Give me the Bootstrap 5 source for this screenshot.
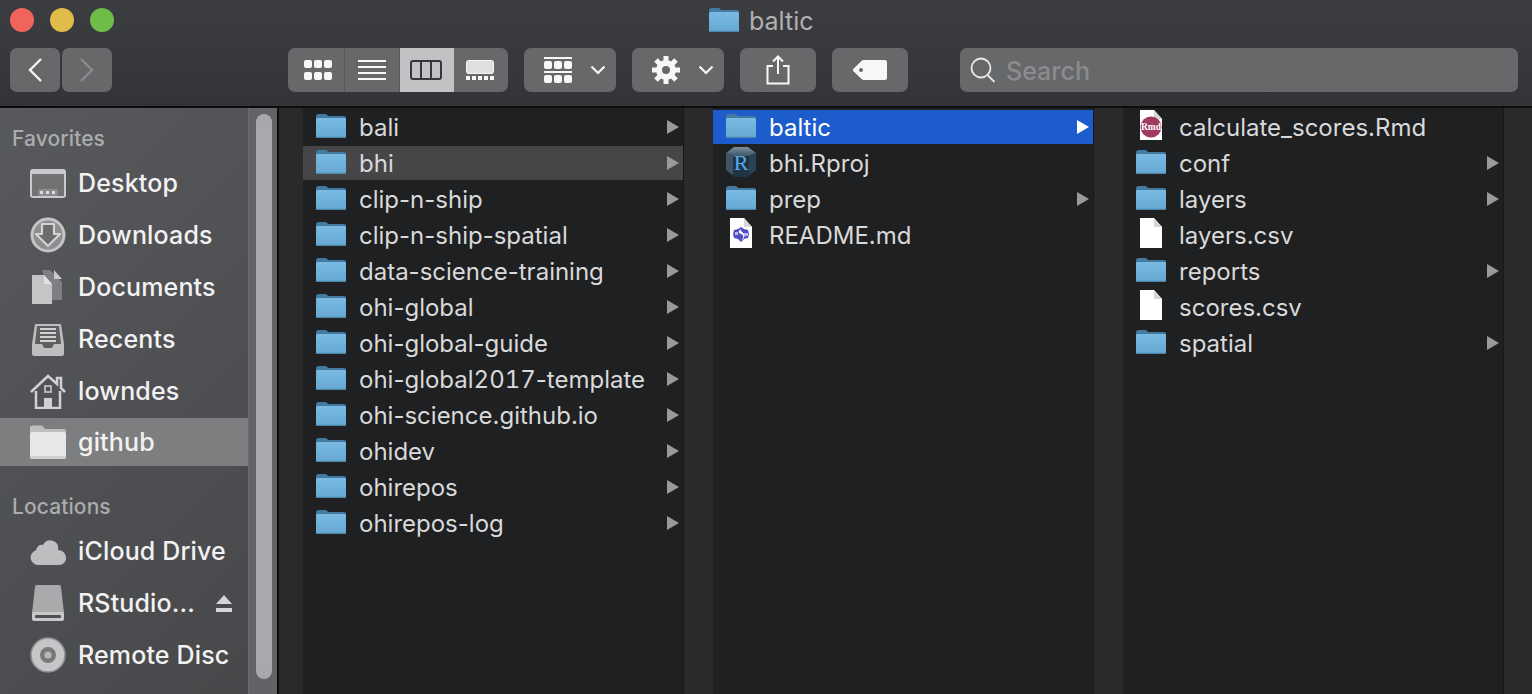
<!DOCTYPE html>
<html lang="en">

<head>
    <meta charset="UTF-8">
    <meta name="viewport" content="width=device-width, initial-scale=1.0">
    <title>baltic</title>
    <link href="https://cdn.jsdelivr.net/npm/bootstrap@5.3.2/dist/css/bootstrap.min.css" rel="stylesheet">
    <style>
        html, body { height: 100%; overflow: hidden; }
        body { background: #1f2022; font-family: Inter, "Liberation Sans", sans-serif; }
        .finder { height: 694px; }

        /* toolbar */
        .topbar { height: 108px; background: linear-gradient(#3c3d40, #333437); border-bottom: 2px solid #0c0c0c; }
        .title-row { height: 48px; }
        .lights { width: 124px; padding: 8px 0 0 10px; gap: 16px; }
        .light { width: 24px; height: 24px; border-radius: 50%; }
        .light-red { background: #f1645c; }
        .light-yellow { background: #e0bd4b; }
        .light-green { background: #6fbd48; }
        .win-title { margin: 0 0 0 585px; padding-top: 9px; gap: 10px; height: 40px; color: #b0b1b3; font-size: 25px; line-height: 24px; }
        .tools { padding-left: 10px; height: 44px; }
        .tbtn { height: 44px; background: #67686a; border-radius: 7px; }
        .nav-prev, .nav-next { width: 50px; }
        .nav-next { margin-left: 2px; margin-right: 176px; }
        .seg-group { width: 220px; overflow: hidden; margin-right: 16px; }
        .seg { height: 44px; border-right: 1px solid #58595b; }
        .seg-on { background: #c1c2c4; border-right: 0; }
        .w-group { width: 92px; margin-right: 16px; }
        .w-share { width: 76px; margin-right: 16px; }
        .w-tag { width: 76px; margin-right: 52px; }
        .search-box { width: 558px; padding-left: 10px; gap: 10px; color: #8b8c8e; font-size: 25px; font-weight: 500; }
        .search-box span { padding-top: 4px; }

        /* sidebar */
        .side { width: 248px; background: linear-gradient(135deg, #58595c, #47484a); }
        .side-scroll { width: 29px; background: #626366; padding: 6px 6px 15px 7px; border-left: 1px solid #6b6c6f; }
        .side-thumb { width: 16px; height: 100%; background: #a7a9ac; border-radius: 8px; }
        .side-rule { width: 2px; background: #0c0c0c; }
        .side-head { color: #abacae; font-size: 21px; font-weight: 500; line-height: 24px; padding-left: 12px; letter-spacing: .1px; }
        .side-row { height: 52px; padding-left: 30px; gap: 12px; color: #f2f2f3; font-size: 25px; font-weight: 500; letter-spacing: .15px; }
        .side-row span { padding-top: 2px; }
        .side-on { height: 48px; background: #7d7e80; }
        .side-icon { width: 36px; height: 36px; flex: none; }

        /* columns */
        .pane-gutter { background: #2a2a2b; flex: none; border-left: 1px solid #181818; }
        .pane-list { width: 380px; flex: none; background: #1f2022; }
        .frow { height: 34px; margin-bottom: 2px; padding: 2px 0 0 13px; gap: 13px; color: #d9d9da; font-size: 24px; white-space: nowrap; }
        .frow-hover { background: #464648; }
        .frow-sel { background: #1d5ccc; color: #fff; }
        .digits { font-variant-numeric: tabular-nums; }
        .ficon { width: 30px; height: 30px; flex: none; }
        .ficon-page { margin-bottom: 6px; }
        .ficon-cube { margin-bottom: 4px; }
        .tri { margin: 0 4px 2px auto; width: 0; height: 0; border-left: 12px solid #9a9a9b; border-top: 7px solid transparent; border-bottom: 7px solid transparent; }
        .frow-sel .tri { border-left-color: #fff; }
    </style>
</head>

<body>
    <svg width="0" height="0" class="position-absolute">
        <defs>
            <linearGradient id="folderFront" x1="0" y1="0" x2="0" y2="1">
                <stop offset="0" stop-color="#78bae2" />
                <stop offset="1" stop-color="#66a8d2" />
            </linearGradient>
            <linearGradient id="cubeTop" x1="0" y1="0" x2="0" y2="1">
                <stop offset="0" stop-color="#7d8f9c" />
                <stop offset="1" stop-color="#3d5566" />
            </linearGradient>
            <symbol id="folder" viewBox="0 0 30 30">
                <path d="M0 3.500C0 2 1 1 2.500 1H9c1.200 0 2 .5 3 2h16c1.200 0 2 .8 2 2v8H0z" fill="#437a9f" />
                <path d="M0 6.500C0 5.500.7 5 2 5h26c1.300 0 2 .5 2 1.500v17c0 .8-.7 1.500-1.500 1.500h-27C.7 25 0 24.300 0 23.500z" fill="url(#folderFront)" />
                <path d="M0 23.800h30v.2c0 .6-.7 1-1.500 1h-27C.7 25 0 24.600 0 24z" fill="#4f86aa" />
            </symbol>
            <symbol id="page" viewBox="0 0 30 30">
                <path d="M4 0h14l8 9v21H4z" fill="#fff" />
                <path d="M18 0v9h8z" fill="#d6d6d6" />
            </symbol>
        </defs>
    </svg>

    <div class="finder d-flex flex-column">
        <header class="topbar flex-shrink-0">
            <div class="title-row d-flex">
                <div class="lights d-flex flex-shrink-0">
                    <div class="light light-red"></div>
                    <div class="light light-yellow"></div>
                    <div class="light light-green"></div>
                </div>
                <h1 class="win-title d-flex fw-normal">
                    <svg width="30" height="30" class="flex-shrink-0" style="margin-top:-2px"><use href="#folder" /></svg>
                    <span>baltic</span>
                </h1>
            </div>
            <div class="tools d-flex">
                <div class="tbtn nav-prev d-flex align-items-center justify-content-center">
                    <svg width="16" height="26" viewBox="0 0 16 26"><path d="M14 2 3 13l11 11" fill="none" stroke="#f4f4f5" stroke-width="2.400" /></svg>
                </div>
                <div class="tbtn nav-next d-flex align-items-center justify-content-center">
                    <svg width="16" height="26" viewBox="0 0 16 26"><path d="m2 2 11 11L2 24" fill="none" stroke="#8a8b8d" stroke-width="2.400" /></svg>
                </div>
                <div class="tbtn seg-group d-flex">
                    <div class="seg d-flex align-items-center" style="width:57px;padding-left:16px">
                        <svg width="28" height="20" viewBox="0 0 28 20" fill="#f7f7f8"><rect width="8" height="8" rx="2" /><rect x="10" width="8" height="8" rx="2" /><rect x="20" width="8" height="8" rx="2" /><rect y="12" width="8" height="8" rx="2" /><rect x="10" y="12" width="8" height="8" rx="2" /><rect x="20" y="12" width="8" height="8" rx="2" /></svg>
                    </div>
                    <div class="seg d-flex align-items-center justify-content-center" style="width:55px">
                        <svg width="28" height="20" viewBox="0 0 28 20" fill="#f7f7f8"><rect width="28" height="2" /><rect y="6" width="28" height="2" /><rect y="12" width="28" height="2" /><rect y="18" width="28" height="2" /></svg>
                    </div>
                    <div class="seg seg-on d-flex align-items-center" style="width:54px;padding-left:10px">
                        <svg width="32" height="20" viewBox="0 0 32 20"><rect x="1" y="1" width="30" height="18" rx="2" fill="none" stroke="#36373a" stroke-width="2" /><path d="M11 1v18M21 1v18" stroke="#36373a" stroke-width="2" /></svg>
                    </div>
                    <div class="seg border-0 d-flex align-items-center" style="width:54px;padding-left:12px">
                        <svg width="28" height="20" viewBox="0 0 28 20"><rect x=".5" y=".5" width="27" height="13" rx="2" fill="#dfe0e1" stroke="#f7f7f8" /><path d="M0 16h4v4H0zM6 16h4v4H6zM12 16h4v4h-4zM18 16h4v4h-4zM24 16h4v4h-4z" fill="#f7f7f8" /></svg>
                    </div>
                </div>
                <div class="tbtn w-group d-flex align-items-center">
                    <svg width="28" height="26" viewBox="0 0 28 26" fill="#f7f7f8" style="margin-left:20px"><rect width="28" height="2" /><rect y="4" width="8" height="8" rx="2" /><rect x="10" y="4" width="8" height="8" rx="2" /><rect x="20" y="4" width="8" height="8" rx="2" /><rect y="14" width="28" height="2" /><rect y="18" width="8" height="8" rx="2" /><rect x="10" y="18" width="8" height="8" rx="2" /><rect x="20" y="18" width="8" height="8" rx="2" /></svg>
                    <svg width="16" height="10" viewBox="0 0 16 10" style="margin-left:18px"><path d="m1.500 1.500 6.500 6.500 6.500-6.500" fill="none" stroke="#f7f7f8" stroke-width="2.200" /></svg>
                </div>
                <div class="tbtn w-group d-flex align-items-center">
                    <svg width="28" height="28" viewBox="0 0 28 28" style="margin-left:20px"><circle cx="14" cy="14" r="7" fill="none" stroke="#f7f7f8" stroke-width="6" /><g stroke="#f7f7f8" stroke-width="5"><path d="M14 0v6M14 22v6M0 14h6M22 14h6M4 4l4.500 4.500M19.500 19.500 24 24M4 24l4.500-4.500M19.500 8.500 24 4" /></g></svg>
                    <svg width="16" height="10" viewBox="0 0 16 10" style="margin-left:18px"><path d="m1.500 1.500 6.500 6.500 6.500-6.500" fill="none" stroke="#f7f7f8" stroke-width="2.200" /></svg>
                </div>
                <div class="tbtn w-share d-flex align-items-center justify-content-center">
                    <svg width="24" height="30" viewBox="0 0 24 30" fill="none" stroke="#f7f7f8" stroke-width="2"><path d="M7 11H1.500v17.500h21V11H17M12 19V2M7 6.500 12 1.500l5 5" /></svg>
                </div>
                <div class="tbtn w-tag d-flex align-items-center justify-content-center">
                    <svg width="34" height="20" viewBox="0 0 34 20"><path d="M11 0h21a2 2 0 0 1 2 2v16a2 2 0 0 1-2 2H11c-1 0-1.800-.4-2.500-1L.7 11.500a2 2 0 0 1 0-3L8.500 1C9.200.4 10 0 11 0zM8 8a2 2 0 1 0 0 4 2 2 0 0 0 0-4z" fill="#f7f7f8" fill-rule="evenodd" /></svg>
                </div>
                <div class="tbtn search-box d-flex align-items-center">
                    <svg width="26" height="26" viewBox="0 0 26 26" fill="none" stroke="#e8e8e9" stroke-width="1.800"><circle cx="11" cy="11" r="9.500" /><path d="m17.500 18 7 7" /></svg>
                    <span>Search</span>
                </div>
            </div>
        </header>

        <main class="d-flex flex-grow-1 overflow-hidden">
            <nav class="side flex-shrink-0 d-flex flex-column">
                <div class="side-head" style="margin-top:19px;margin-bottom:6px">Favorites</div>
                <div class="side-row d-flex align-items-center">
                    <svg class="side-icon" viewBox="0 0 36 36"><rect y="0" x="0" width="36" height="29" rx="3" fill="#c9cacb" transform="translate(0 4)" /><rect x="2" y="9" width="32" height="22" fill="#717274" /><rect x="8" y="24" width="20" height="7" fill="#c9cacb" opacity=".3" /><path d="M10 26h3v3h-3zM16 26h3v3h-3zM22 26h3v3h-3z" fill="#dcdcdd" /></svg>
                    <span>Desktop</span>
                </div>
                <div class="side-row d-flex align-items-center">
                    <svg class="side-icon" viewBox="0 0 36 36"><circle cx="18" cy="18" r="16" fill="#8d8e90" stroke="#c3c4c5" stroke-width="3" /><path d="M12 7h12v10h6L18 29 6 17h6z" fill="#6b6c6e" stroke="#d2d3d4" stroke-width="2.200" stroke-linejoin="round" /></svg>
                    <span>Downloads</span>
                </div>
                <div class="side-row d-flex align-items-center">
                    <svg class="side-icon" viewBox="0 0 36 36"><path d="M12 1h8l12 12v18H21z" fill="#7e7f81" /><path d="M24 1l8 9h-8z" fill="#c9cacb" /><path d="M2 6h12l8 9v20H2z" fill="#c4c5c6" /><path d="M14 6v9h8z" fill="#e2e2e3" /></svg>
                    <span>Documents</span>
                </div>
                <div class="side-row d-flex align-items-center">
                    <svg class="side-icon" viewBox="0 0 36 36"><path d="M5 3h26l3 20v10a2 2 0 0 1-2 2H4a2 2 0 0 1-2-2V23z" fill="#bcbdbe" /><path d="M7 5h22l2 18h-7l-2 4h-8l-2-4H5z" fill="#5d5e60" /><path d="M10 8h16M10 12h16M10 16h16M10 20h16" stroke="#d0d1d2" stroke-width="2" /></svg>
                    <span>Recents</span>
                </div>
                <div class="side-row d-flex align-items-center">
                    <svg class="side-icon" viewBox="0 0 36 36"><path d="M1 19 18 3l9 8V5h4v10l4 4" fill="none" stroke="#d0d1d2" stroke-width="2.500" /><path d="M6 18v17h24V18" fill="none" stroke="#d0d1d2" stroke-width="2.500" /><rect x="15" y="13" width="6" height="6" fill="none" stroke="#d0d1d2" stroke-width="1.500" /><rect x="14" y="25" width="8" height="10" fill="#d0d1d2" /></svg>
                    <span>lowndes</span>
                </div>
                <div class="side-row side-on d-flex align-items-center" style="margin-top:1px">
                    <svg class="side-icon" viewBox="0 0 36 36"><path d="M0 4c0-1.500 1-2.500 2.500-2.500H12L15 5h19c1 0 2 1 2 2v5H0z" fill="#bdbebf" /><path d="M0 10c0-1 1-2 2-2h32c1 0 2 1 2 2v23c0 1-1 2-2 2H2c-1 0-2-1-2-2z" fill="#e6e7e8" /><path d="M0 32h36v1c0 1-1 2-2 2H2c-1 0-2-1-2-2z" fill="#cfd0d1" /></svg>
                    <span>github</span>
                </div>
                <div class="side-head" style="margin-top:29px;margin-bottom:6px">Locations</div>
                <div class="side-row d-flex align-items-center">
                    <svg class="side-icon" viewBox="0 0 36 36"><path d="M8 32a7.500 7.500 0 0 1-2-14.700C7 13 10 11 13 12c2-4 6-6 10-4 4 1 6 5 5 9 5 0 8 4 8 8s-3 7-7 7z" fill="#bdbebf" /></svg>
                    <span>iCloud Drive</span>
                </div>
                <div class="side-row d-flex align-items-center">
                    <svg class="side-icon" viewBox="0 0 36 36"><path d="M5 2a2 2 0 0 1 2-2h22a2 2 0 0 1 2 2l3 26H2z" fill="#a9aaab" /><rect x="2" y="27" width="32" height="9" rx="2" fill="#c7c8c9" /><rect x="5" y="30" width="26" height="3" rx="1" fill="#4e4f51" /></svg>
                    <span>RStudio...</span>
                    <svg width="16" height="17" viewBox="0 0 16 17" class="ms-auto" style="margin-right:16px"><path d="M8 0l8 9H0z" fill="#d4d5d6" /><rect y="13" width="16" height="4" fill="#d4d5d6" /></svg>
                </div>
                <div class="side-row d-flex align-items-center">
                    <svg class="side-icon" viewBox="0 0 36 36"><circle cx="18" cy="18" r="17" fill="#c5c6c7" stroke="#8d8e90" stroke-width="1.500" /><circle cx="18" cy="18" r="8" fill="#77787a" /><circle cx="18" cy="18" r="3.500" fill="#b5b6b7" /></svg>
                    <span>Remote Disc</span>
                </div>
            </nav>
            <div class="side-scroll flex-shrink-0"><div class="side-thumb"></div></div>
            <div class="side-rule flex-shrink-0"></div>

            <div class="pane-gutter" style="width:24px;border-left:0"></div>
            <section class="pane-list">
                <div class="frow d-flex align-items-center" style="margin-top:2px"><svg class="ficon"><use href="#folder" /></svg>bali<i class="tri"></i></div>
                <div class="frow frow-hover d-flex align-items-center"><svg class="ficon"><use href="#folder" /></svg>bhi<i class="tri"></i></div>
                <div class="frow d-flex align-items-center"><svg class="ficon"><use href="#folder" /></svg>clip-n-ship<i class="tri"></i></div>
                <div class="frow d-flex align-items-center"><svg class="ficon"><use href="#folder" /></svg>clip-n-ship-spatial<i class="tri"></i></div>
                <div class="frow d-flex align-items-center"><svg class="ficon"><use href="#folder" /></svg>data-science-training<i class="tri"></i></div>
                <div class="frow d-flex align-items-center"><svg class="ficon"><use href="#folder" /></svg>ohi-global<i class="tri"></i></div>
                <div class="frow d-flex align-items-center"><svg class="ficon"><use href="#folder" /></svg>ohi-global-guide<i class="tri"></i></div>
                <div class="frow d-flex align-items-center"><svg class="ficon"><use href="#folder" /></svg><span>ohi-global<span class="digits">2017</span>-template</span><i class="tri"></i></div>
                <div class="frow d-flex align-items-center"><svg class="ficon"><use href="#folder" /></svg>ohi-science.github.io<i class="tri"></i></div>
                <div class="frow d-flex align-items-center"><svg class="ficon"><use href="#folder" /></svg>ohidev<i class="tri"></i></div>
                <div class="frow d-flex align-items-center"><svg class="ficon"><use href="#folder" /></svg>ohirepos<i class="tri"></i></div>
                <div class="frow d-flex align-items-center"><svg class="ficon"><use href="#folder" /></svg>ohirepos-log<i class="tri"></i></div>
            </section>

            <div class="pane-gutter" style="width:30px"></div>
            <section class="pane-list">
                <div class="frow frow-sel d-flex align-items-center" style="margin-top:2px"><svg class="ficon"><use href="#folder" /></svg>baltic<i class="tri"></i></div>
                <div class="frow d-flex align-items-center">
                    <svg class="ficon ficon-cube" viewBox="0 0 30 30"><path d="M8 0h14l8 6v17l-8 7H8l-8-7V6z" fill="#1f3546" /><path d="M8 0h14l8 6-7 3H7L0 6z" fill="url(#cubeTop)" /><path d="M0 6l7 3v19l-7-5z" fill="#3f5464" /><path d="M30 6l-7 3v19l7-5z" fill="#2a4252" /><text x="15" y="23" text-anchor="middle" font-family="Liberation Serif, serif" font-size="22" fill="#5aa9ea">R</text></svg>
                    bhi.Rproj
                </div>
                <div class="frow d-flex align-items-center"><svg class="ficon"><use href="#folder" /></svg>prep<i class="tri"></i></div>
                <div class="frow d-flex align-items-center">
                    <svg class="ficon ficon-page" viewBox="0 0 30 30"><use href="#page" width="30" height="30" /><path d="M15 9l3 2 4 1 1 4-1 4-4 1-3 3-3-3-4-1-1-4 1-4 4-1z" fill="#4f4fc4" /><path d="M15 11c-3 2-3 4 0 5s3 4 0 6c1 0 5-3 3-6s-4-3-3-5z" fill="#fff" /><path d="M9 14h3v3H9zM18 15h4v3h-4z" fill="#b9b9ee" /></svg>
                    README.md
                </div>
            </section>

            <div class="pane-gutter" style="width:30px"></div>
            <section class="pane-list">
                <div class="frow d-flex align-items-center" style="margin-top:2px">
                    <svg class="ficon ficon-page" viewBox="0 0 30 30"><use href="#page" width="30" height="30" /><circle cx="15" cy="17" r="10.500" fill="#a13a63" /><text x="15" y="20" text-anchor="middle" font-family="Liberation Serif, serif" font-weight="700" font-size="9.500" fill="#fff">Rmd</text></svg>
                    calculate_scores.Rmd
                </div>
                <div class="frow d-flex align-items-center"><svg class="ficon"><use href="#folder" /></svg>conf<i class="tri"></i></div>
                <div class="frow d-flex align-items-center"><svg class="ficon"><use href="#folder" /></svg>layers<i class="tri"></i></div>
                <div class="frow d-flex align-items-center"><svg class="ficon ficon-page"><use href="#page" /></svg>layers.csv</div>
                <div class="frow d-flex align-items-center"><svg class="ficon"><use href="#folder" /></svg>reports<i class="tri"></i></div>
                <div class="frow d-flex align-items-center"><svg class="ficon ficon-page"><use href="#page" /></svg>scores.csv</div>
                <div class="frow d-flex align-items-center"><svg class="ficon"><use href="#folder" /></svg>spatial<i class="tri"></i></div>
            </section>
            <div class="pane-gutter flex-grow-1"></div>
        </main>
    </div>
    <script src="https://cdn.jsdelivr.net/npm/bootstrap@5.3.2/dist/js/bootstrap.bundle.min.js"></script>
</body>

</html>
